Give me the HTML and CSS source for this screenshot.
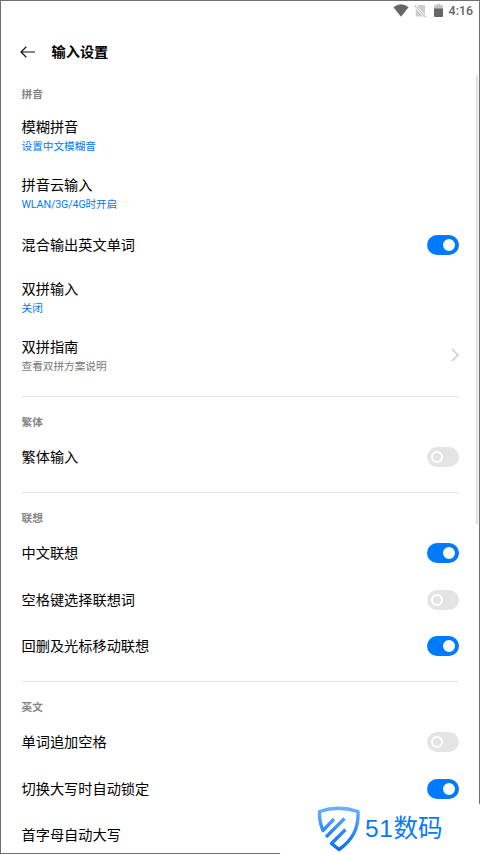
FILE: index.html
```html
<!DOCTYPE html>
<html lang="zh-CN">
<head>
<meta charset="utf-8">
<title>输入设置</title>
<link rel="stylesheet" href="styles.css">
</head>
<body>
<div class="screen">
  <div class="status">
    <svg class="wifi" width="16" height="13" viewBox="0 0 16 13"><path d="M0.4 3.2Q8-2.8 15.6 3.2L8 12.7Z" fill="#666"/></svg>
    <svg class="sim" width="13" height="14" viewBox="0 0 13 14"><path d="M4.5 1H11v11.5H1.7V4Z" fill="#ccc"/><path d="M0.3 1.2L12 13.3" stroke="#fff" stroke-width="2.6"/><path d="M0.3 1.2L12 13.3" stroke="#c4c4c4" stroke-width="1.1"/></svg>
    <svg class="battery" width="9" height="13" viewBox="0 0 9 13"><path d="M2.5 0h4v1.2H9V5H0V1.2h2.5Z" fill="#c6c6c6"/><path d="M0 4.5h9V12q0 1-1 1H1q-1 0-1-1Z" fill="#666"/></svg>
    <span class="time">4:16</span>
  </div>
  <header class="header">
    <svg width="16" height="12" viewBox="0 0 16 12" fill="none" stroke="#111" stroke-width="1.2"><path d="M15 6H1M6.3 0.8L1 6l5.3 5.2"/></svg>
    <h1>输入设置</h1>
  </header>
  <main>
    <section>
      <h2>拼音</h2>
      <div class="row double"><div class="label">模糊拼音<small>设置中文模糊音</small></div></div>
      <div class="row double"><div class="label">拼音云输入<small class="latin">WLAN/3G/4G时开启</small></div></div>
      <div class="row"><div class="label">混合输出英文单词</div><i class="switch on"></i></div>
      <div class="row double"><div class="label">双拼输入<small>关闭</small></div></div>
      <div class="row double"><div class="label">双拼指南<small class="muted">查看双拼方案说明</small></div><svg width="9" height="14" viewBox="0 0 9 14" fill="none" stroke="#c4c4c4" stroke-width="1.3"><path d="M2 1L8 7l-6 6"/></svg></div>
    </section>
    <section class="compact">
      <h2>繁体</h2>
      <div class="row"><div class="label">繁体输入</div><i class="switch"></i></div>
    </section>
    <section>
      <h2>联想</h2>
      <div class="row"><div class="label">中文联想</div><i class="switch on"></i></div>
      <div class="row"><div class="label">空格键选择联想词</div><i class="switch"></i></div>
      <div class="row"><div class="label">回删及光标移动联想</div><i class="switch on"></i></div>
    </section>
    <section>
      <h2>英文</h2>
      <div class="row"><div class="label">单词追加空格</div><i class="switch"></i></div>
      <div class="row"><div class="label">切换大写时自动锁定</div><i class="switch on"></i></div>
      <div class="row"><div class="label">首字母自动大写</div></div>
    </section>
  </main>
  <div class="scrollbar"></div>
</div>
<div class="watermark">
  <svg width="44" height="46" viewBox="0 0 44 46" fill="none" stroke="url(#g)" stroke-width="3.4" stroke-linejoin="round">
    <defs><linearGradient id="g" x1="0" y1="0" x2="0" y2="46" gradientUnits="userSpaceOnUse"><stop offset="0" stop-color="#6ab4fb"/><stop offset="0.6" stop-color="#2c87fb"/><stop offset="1" stop-color="#006cf8"/></linearGradient></defs>
    <path d="M17 13L6 24.5Q2.2 16 2.5 5.5Q21.5-1 41 5.5Q41.5 19 36.5 28Q31.5 37 22 43.500L14.5 37.5L28.5 23.5"/>
    <path d="M9 31L27.5 12.5"/>
  </svg>
  <span><b>51</b>数码</span>
</div>
</body>
</html>
```
FILE: styles.css
```css
*, *::before { box-sizing: border-box; }
body {
  margin: 0;
  width: 480px;
  height: 854px;
  overflow: hidden;
  position: relative;
  background: #fff;
  color: #000;
  font-family: Roboto, "Noto Sans CJK SC", sans-serif;
}
.screen {
  position: relative;
  height: 854px;
  border: 1px solid #746e70;
  overflow: hidden;
}
.status {
  height: 19px;
  padding-right: 6px;
  display: flex;
  align-items: center;
  justify-content: flex-end;
}
.sim { margin-left: 5px; }
.battery { margin-left: 7px; }
.time {
  margin-left: 6px;
  font-size: 12.4px;
  font-weight: 500;
  color: #666;
}
.header {
  height: 62px;
  padding-left: 19px;
  display: flex;
  align-items: center;
  gap: 16px;
}
.header svg { margin-top: 2px; }
h1 {
  margin: 0 0 0 -0.5px;
  font-size: 14.2px;
  font-weight: 700;
}
main { padding: 0 20.5px; }
section { margin-bottom: 11.5px; }
section + section { border-top: 1px solid #e4e4e4; }
h2 {
  margin: 0;
  height: 37.5px;
  padding-top: 18px;
  font-size: 10.65px;
  line-height: 16px;
  font-weight: 700;
  color: #858585;
}
section:first-child h2 { height: 24px; padding-top: 5px; }
.compact h2 { height: 37.2px; }
.row {
  height: 46.3px;
  display: flex;
  align-items: center;
  justify-content: space-between;
}
.double { height: 58px; }
.label {
  font-size: 14.2px;
  line-height: 20px;
}
.double .label { padding-top: 3px; }
small {
  display: block;
  font-size: 10.65px;
  line-height: 19px;
  color: #007aff;
}
.latin { letter-spacing: -0.1px; }
.muted { color: #777; }
.switch {
  width: 32px;
  height: 20px;
  padding: 4px;
  border-radius: 10px;
  background: #e4e4e4;
  display: flex;
  align-items: center;
}
.switch::before {
  content: "";
  width: 12px;
  height: 12px;
  border: 2px solid #fff;
  border-radius: 50%;
}
.on { background: #007aff; justify-content: flex-end; }
.on::before { background: #fff; }
.scrollbar {
  position: absolute;
  top: 74px;
  right: 1px;
  width: 2px;
  height: 449px;
  background: #e0e0e0;
}
.watermark {
  position: absolute;
  left: 280px;
  top: 804px;
  width: 200px;
  height: 50px;
  padding-left: 37px;
  background: #fff;
  display: flex;
  align-items: center;
  gap: 4px;
}
.watermark span {
  font-family: "Liberation Sans", "Noto Sans CJK SC", sans-serif;
  font-size: 24.5px;
  line-height: 52px;
  color: #0878fa;
}
.watermark b {
  font-weight: 400;
  letter-spacing: 0.6px;
}
```
